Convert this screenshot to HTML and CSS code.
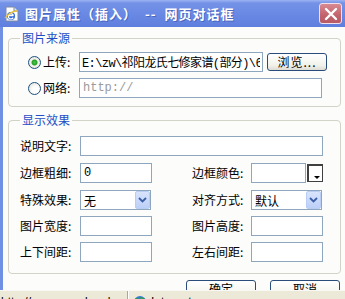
FILE: index.html
```html
<!DOCTYPE html>
<html>
<head>
    <title>图片属性（插入）</title>
    <link rel="stylesheet" href="styles.css">
</head>
<body>
<div class="window">
    <div class="titlebar">
        <svg class="app-icon" width="16" height="16" viewBox="0 0 16 16">
            <path d="M2 1h8l4 4v10H2z" fill="#fff" stroke="#7a8aa8"/>
            <path d="M10 1v4h4" fill="#dfe6f2" stroke="#7a8aa8"/>
            <circle cx="7" cy="10" r="4" fill="#2c6ad8"/>
            <path d="M4.6 9.6h4.8M9.2 11.6a2.6 2.6 0 1 1 0.2-2" fill="none" stroke="#fff" stroke-width="1.3"/>
            <path d="M1 12c3-4 9-8 13-7" fill="none" stroke="#f0c020" stroke-width="1.2"/>
        </svg>
        <span class="title">图片属性（插入）  --  网页对话框</span>
        <button class="close" type="button">
            <svg width="14" height="14" viewBox="0 0 14 14">
                <path d="M2 2l10 10M12 2L2 12" stroke="#fff" stroke-width="2.4" stroke-linecap="round"/>
            </svg>
        </button>
    </div>

    <div class="client">
        <fieldset class="group">
            <legend>图片来源</legend>
            <div class="source-grid">
                <input type="radio" name="src" class="radio" checked>
                <label class="lbl">上传:</label>
                <input type="text" class="field upload" value="E:\zw\祁阳龙氏七修家谱(部分)\6.jpg">
                <button type="button" class="btn browse">浏览...</button>

                <input type="radio" name="src" class="radio">
                <label class="lbl">网络:</label>
                <input type="text" class="field url" placeholder="http://">
            </div>
        </fieldset>

        <fieldset class="group effects">
            <legend>显示效果</legend>
            <div class="effect-grid">
                <label class="lbl">说明文字:</label>
                <input type="text" class="field wide">

                <label class="lbl">边框粗细:</label>
                <input type="text" class="field small" value="0">
                <label class="lbl">边框颜色:</label>
                <div class="color-pick">
                    <input type="text" class="field color">
                    <span class="color-btn"><span class="tri"></span></span>
                </div>

                <label class="lbl">特殊效果:</label>
                <div class="select">
                    <select><option>无</option></select>
                    <span class="drop">
                        <svg width="9" height="6" viewBox="0 0 9 6"><path d="M1 1l3.5 3.5L8 1" fill="none" stroke="#3b5ea8" stroke-width="1.8"/></svg>
                    </span>
                </div>
                <label class="lbl">对齐方式:</label>
                <div class="select">
                    <select><option>默认</option></select>
                    <span class="drop">
                        <svg width="9" height="6" viewBox="0 0 9 6"><path d="M1 1l3.5 3.5L8 1" fill="none" stroke="#3b5ea8" stroke-width="1.8"/></svg>
                    </span>
                </div>

                <label class="lbl">图片宽度:</label>
                <input type="text" class="field small">
                <label class="lbl">图片高度:</label>
                <input type="text" class="field small">

                <label class="lbl">上下间距:</label>
                <input type="text" class="field small">
                <label class="lbl">左右间距:</label>
                <input type="text" class="field small">
            </div>
        </fieldset>

        <div class="actions">
            <button type="button" class="btn action">确定</button>
            <button type="button" class="btn action">取消</button>
        </div>
    </div>

    <div class="statusbar">
        <span class="status-url">http://www.seaskyedu.com/</span>
        <span class="status-zone">
            <svg width="14" height="14" viewBox="0 0 14 14">
                <circle cx="7" cy="7" r="6" fill="#2f7ad8"/>
                <path d="M3 4c2 0 3 1 2 3s1 3 0 5M8 2c0 2 2 2 4 3" fill="none" stroke="#3aa040" stroke-width="2"/>
            </svg>
            Internet
        </span>
    </div>
</div>
</body>
</html>
```

FILE: styles.css
```css
* {
    box-sizing: border-box;
}
body {
    margin: 0;
    width: 345px;
    height: 299px;
    overflow: hidden;
    font-family: "Noto Sans CJK SC", "Liberation Sans", sans-serif;
    font-size: 12px;
    color: #000;
    background: #fcfcfa;
}
.window {
    display: flex;
    flex-direction: column;
    height: 299px;
}

/* title bar */
.titlebar {
    height: 27px;
    flex: none;
    display: flex;
    align-items: center;
    padding: 0 3px 0 4px;
    background: linear-gradient(#9db3f2 0, #7492e7 3px, #6a89e4 50%, #5f7fdf 100%);
}
.app-icon {
    flex: none;
    margin-right: 5px;
}
.title {
    flex: 1;
    color: #fff;
    font-weight: bold;
    font-size: 13px;
    letter-spacing: 1px;
    white-space: pre;
    text-shadow: 1px 1px 0 #4a66c0;
}
.close {
    width: 23px;
    height: 21px;
    padding: 0;
    border: 1px solid #f0e0ea;
    border-radius: 3px;
    background: linear-gradient(#d98a92, #c1626c 60%, #b85a66);
    display: flex;
    align-items: center;
    justify-content: center;
}

/* client area */
.client {
    height: 263px;
    flex: none;
    overflow: hidden;
    border-left: 3px solid #7090e4;
    padding: 4px 5px 0 5px;
    background: #fcfcfa;
}
.group {
    margin: 0;
    border: 1px solid #d2d2c6;
    border-radius: 4px;
    padding: 7px 17px 8px 19px;
}
.group legend {
    color: #1f4fc6;
    line-height: 14px;
    padding: 0 2px;
    margin-left: -8px;
}
.effects {
    margin-top: 6px;
    padding: 9px 17px 11px 11px;
}
.effects legend {
    margin-left: 0;
}

.lbl {
    line-height: 20px;
    white-space: nowrap;
}

/* radio rows */
.source-grid {
    display: grid;
    grid-template-columns: 13px 38px 184px 60px;
    grid-template-rows: 20px 20px;
    row-gap: 6px;
    align-items: center;
}
.radio {
    appearance: none;
    width: 13px;
    height: 13px;
    margin: 0;
    border: 1px solid #1c5180;
    border-radius: 50%;
    background: radial-gradient(circle at 60% 60%, #ffffff 30%, #dcdcd2 100%);
}
.radio:checked {
    background: radial-gradient(circle, #4fc24f 0, #21a121 2.5px, #f4f4ee 3.5px, #dcdcd2 100%);
}
.source-grid .lbl {
    padding-left: 2px;
}
.field {
    height: 20px;
    margin: 0;
    border: 1px solid #8fa6bf;
    background: #fff;
    padding: 0 3px;
    font-family: "Liberation Mono", "Noto Sans CJK SC", monospace;
    font-size: 12px;
    color: #000;
    outline: none;
}
.upload {
    width: 184px;
    letter-spacing: -0.6px;
    padding: 0 2px;
}
.url {
    grid-column: 3 / 5;
    width: 243px;
}
.url::placeholder {
    color: #9a9a9a;
}

.btn {
    font-family: "Noto Sans CJK SC", "Liberation Sans", sans-serif;
    font-size: 12px;
    color: #000;
    border: 1px solid #2a4c7a;
    border-radius: 3px;
    background: linear-gradient(#ffffff, #f2f2ec 70%, #dcdcd4);
    padding: 0;
}
.browse {
    margin-left: 4px;
    width: 60px;
    height: 18px;
    line-height: 14px;
    letter-spacing: 1px;
}

/* effect rows */
.effect-grid {
    display: grid;
    grid-template-columns: 60px 112px 59px 72px;
    grid-template-rows: 21px 21px 20px 20px 20px;
    row-gap: 6px;
    align-items: start;
}
.wide {
    grid-column: 2 / 5;
    width: 243px;
}
.small {
    width: 72px;
}
.color-pick {
    display: flex;
    align-items: center;
}
.color {
    width: 55px;
}
.color-btn {
    width: 19px;
    height: 18px;
    margin-left: 1px;
    border: 1px solid #404040;
    border-left-width: 2px;
    border-top-width: 2px;
    background: #fff;
    position: relative;
}
.tri {
    position: absolute;
    right: 2px;
    bottom: 2px;
    border-left: 3px solid transparent;
    border-right: 3px solid transparent;
    border-top: 3px solid #000;
}
.select {
    position: relative;
    width: 71px;
    height: 20px;
}
.select select {
    appearance: none;
    width: 71px;
    height: 20px;
    margin: 0;
    border: 1px solid #8fa6bf;
    background: #fff;
    font-family: "Noto Sans CJK SC", sans-serif;
    font-size: 12px;
    padding: 0 3px;
    color: #000;
}
.drop {
    position: absolute;
    right: 1px;
    top: 1px;
    width: 15px;
    height: 18px;
    border: 1px solid #b8ccf4;
    border-radius: 2px;
    background: linear-gradient(#d8e4fc, #bccff8);
    display: flex;
    align-items: center;
    justify-content: center;
}

/* buttons */
.actions {
    display: flex;
    justify-content: flex-end;
    gap: 14px;
    margin-top: 6px;
}
.action {
    width: 70px;
    height: 22px;
    line-height: 16px;
    padding-bottom: 4px;
}

/* status bar */
.statusbar {
    flex: 1;
    display: flex;
    background: #ece9d8;
    border-top: 1px solid #f8f8f4;
    overflow: hidden;
    font-family: "Liberation Sans", sans-serif;
    font-size: 12px;
}
.status-url {
    width: 128px;
    padding: 4px 0 0 1px;
    white-space: nowrap;
    overflow: hidden;
    border-right: 1px solid #aca899;
}
.status-zone {
    display: flex;
    gap: 4px;
    padding: 4px 0 0 4px;
    border-left: 1px solid #fff;
}
```
